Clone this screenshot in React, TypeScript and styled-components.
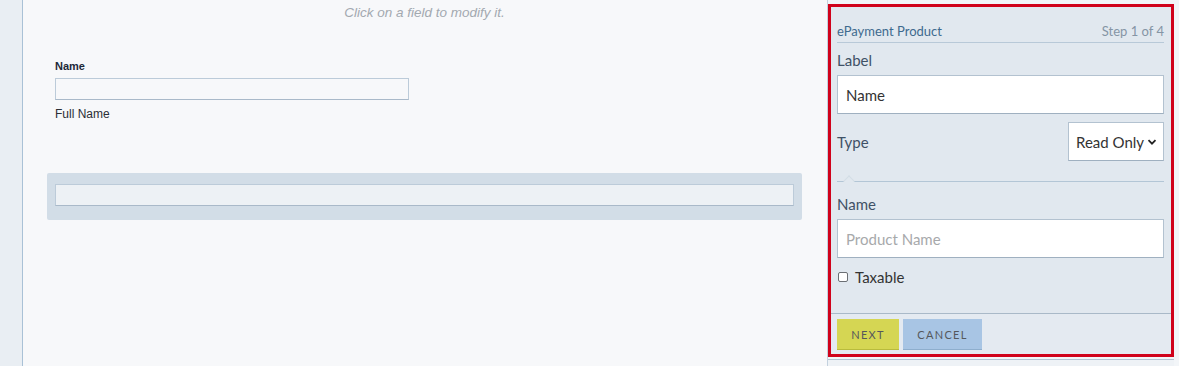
import React from 'react';
import styled, { createGlobalStyle } from 'styled-components';

const GlobalStyle = createGlobalStyle`
  html, body {
    margin: 0;
    padding: 0;
    background: #f7f8fa;
  }
  * {
    box-sizing: border-box;
  }
`;

const Page = styled.div`
  display: flex;
  width: 1179px;
  height: 366px;
  overflow: hidden;
  font-family: 'Liberation Sans', Arial, sans-serif;
`;

const SideStrip = styled.div`
  width: 23px;
  flex-shrink: 0;
  background: #e9eef3;
  border-right: 1px solid #a9c1d6;
`;

const Canvas = styled.main`
  width: 804px;
  flex-shrink: 0;
  background: #f7f8fa;
  padding: 5px 25px 0 24px;
  display: flex;
  flex-direction: column;
`;

const Hint = styled.p`
  margin: 0;
  text-align: center;
  font-size: 13.5px;
  font-style: italic;
  color: #a3a9b0;
  line-height: 15px;
`;

const FieldBlock = styled.div`
  margin: 40px 0 0 8px;
  display: flex;
  flex-direction: column;
`;

const FieldTitle = styled.label`
  font-size: 11px;
  font-weight: bold;
  color: #1d2838;
  line-height: 13px;
`;

const PreviewInput = styled.div<{ $width?: string; $bg?: string }>`
  width: ${(p) => p.$width ?? '354px'};
  height: 22px;
  margin-top: 5px;
  background: ${(p) => p.$bg ?? '#f7f8fa'};
  border: 1px solid #bccbd9;
  border-bottom-color: #a9b9c9;
`;

const FieldHelp = styled.span`
  margin-top: 7px;
  font-size: 12px;
  color: #2a2f36;
  line-height: 14px;
`;

const DropZone = styled.div`
  margin-top: 52px;
  height: 47px;
  background: #d2dde7;
  border-radius: 2px;
  padding: 11px 8px 0 8px;

  ${PreviewInput} {
    margin-top: 0;
  }
`;

const RightColumn = styled.aside`
  flex: 1;
  background: #f2f5f8;
  border-left: 1px solid #c3d1de;
  display: flex;
  flex-direction: column;
`;

const Editor = styled.section`
  margin: 4px 5px 0 0;
  height: 353px;
  border: 3px solid #d0021b;
  background: #e1e8ef;
  display: flex;
  flex-direction: column;
  font-family: 'Lato', 'Noto Sans', sans-serif;
`;

const EditorBody = styled.div`
  flex: 1;
  padding: 0 7px 0 6px;
  display: flex;
  flex-direction: column;
`;

const EditorHeader = styled.div`
  display: flex;
  justify-content: space-between;
  align-items: flex-end;
  height: 36px;
  padding-bottom: 3px;
  border-bottom: 1px solid #b8c9d8;
`;

const HeaderTitle = styled.span`
  font-size: 13px;
  color: #3e6a8e;
`;

const StepCount = styled.span`
  font-size: 13px;
  color: #8595a5;
`;

const PanelLabel = styled.label<{ $top?: number }>`
  display: block;
  margin-top: ${(p) => p.$top ?? 8}px;
  font-size: 15px;
  color: #3f5166;
  line-height: 18px;
`;

const TextBox = styled.input`
  width: 100%;
  height: 39px;
  margin-top: 6px;
  padding: 0 8px;
  background: #ffffff;
  border: 1px solid #b3c2d0;
  border-bottom-color: #9fb0c0;
  border-radius: 0;
  font-family: inherit;
  font-size: 15px;
  color: #333;
  outline: none;

  &::placeholder {
    color: #a7a9ab;
  }
`;

const TypeRow = styled.div`
  display: flex;
  justify-content: space-between;
  align-items: center;
  margin-top: 8px;
  height: 39px;
`;

const SelectBox = styled.div`
  width: 96px;
  height: 39px;
  background: #ffffff;
  border: 1px solid #b3c2d0;
  border-bottom-color: #9fb0c0;
  display: flex;
  align-items: center;
  padding-left: 7px;
  gap: 3px;
  font-size: 15px;
  color: #333;
`;

const Divider = styled.div`
  position: relative;
  margin-top: 20px;
  height: 1px;
  background: #b3c6d6;

  &::before {
    content: '';
    position: absolute;
    left: 8px;
    top: -4px;
    width: 7px;
    height: 7px;
    background: #e1e8ef;
    border-left: 1px solid #d3dde6;
    border-top: 1px solid #d3dde6;
    transform: rotate(45deg);
  }
`;

const CheckRow = styled.label`
  display: flex;
  align-items: center;
  gap: 7px;
  margin-top: 10px;
  font-size: 15px;
  color: #333;
`;

const CheckBox = styled.span`
  width: 10px;
  height: 10px;
  margin-left: 1px;
  background: #fff;
  border: 1px solid #6b6f74;
  border-radius: 2px;
`;

const EditorFooter = styled.div`
  height: 41px;
  border-top: 1px solid #a9b9c8;
  background: #e4eaf1;
  display: flex;
  gap: 4px;
  padding: 5px 6px 0 6px;
`;

const ActionButton = styled.button<{ $tone: 'next' | 'cancel' }>`
  height: 31px;
  width: ${(p) => (p.$tone === 'next' ? 62 : 79)}px;
  padding: 0;
  border: none;
  border-bottom: 1px solid ${(p) => (p.$tone === 'next' ? '#b9bb3c' : '#8eaecd')};
  background: ${(p) => (p.$tone === 'next' ? '#d5d653' : '#a8c5e4')};
  color: #55585c;
  font-family: inherit;
  font-size: 11px;
  letter-spacing: 1.3px;
  cursor: pointer;
`;

const BelowEditor = styled.div`
  margin-top: 2px;
  margin-right: 5px;
  border-top: 1px solid #b2c3d2;
  flex: 1;
  background: #eef2f6;
`;

const Chevron = () => (
  <svg width="10" height="10" viewBox="0 0 10 10">
    <path d="M1.5 3.2 L5 6.7 L8.5 3.2" fill="none" stroke="#222" strokeWidth="1.8" />
  </svg>
);

const App = () => (
  <>
    <GlobalStyle />
    <Page>
      <SideStrip />
      <Canvas>
        <Hint>Click on a field to modify it.</Hint>
        <FieldBlock>
          <FieldTitle>Name</FieldTitle>
          <PreviewInput />
          <FieldHelp>Full Name</FieldHelp>
        </FieldBlock>
        <DropZone>
          <PreviewInput $width="739px" $bg="#edf1f5" />
        </DropZone>
      </Canvas>
      <RightColumn>
        <Editor>
          <EditorBody>
            <EditorHeader>
              <HeaderTitle>ePayment Product</HeaderTitle>
              <StepCount>Step 1 of 4</StepCount>
            </EditorHeader>
            <PanelLabel>Label</PanelLabel>
            <TextBox defaultValue="Name" />
            <TypeRow>
              <PanelLabel $top={0}>Type</PanelLabel>
              <SelectBox>
                Read Only <Chevron />
              </SelectBox>
            </TypeRow>
            <Divider />
            <PanelLabel $top={13}>Name</PanelLabel>
            <TextBox placeholder="Product Name" />
            <CheckRow>
              <CheckBox />
              Taxable
            </CheckRow>
          </EditorBody>
          <EditorFooter>
            <ActionButton $tone="next">NEXT</ActionButton>
            <ActionButton $tone="cancel">CANCEL</ActionButton>
          </EditorFooter>
        </Editor>
        <BelowEditor />
      </RightColumn>
    </Page>
  </>
);

export default App;
